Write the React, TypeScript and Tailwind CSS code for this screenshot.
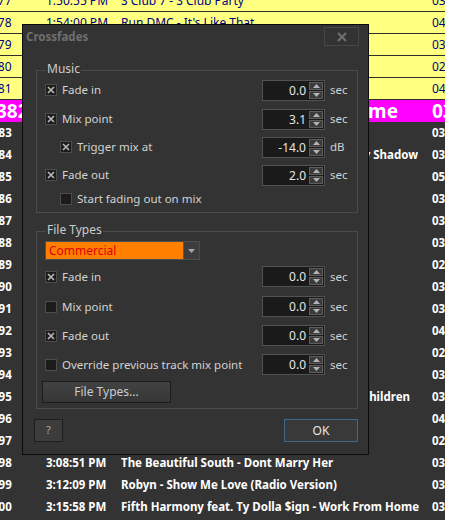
import React from 'react';

type Row = { n: string; t: string; title: string; d: string; end?: number };

const yellowRows: Row[] = [
  { n: '377', t: '1:50:55 PM', title: 'S Club 7 - S Club Party', d: '03:48' },
  { n: '378', t: '1:54:00 PM', title: "Run DMC - It's Like That", d: '04:10' },
  { n: '379', t: '1:58:10 PM', title: 'Steps - Tragedy', d: '03:54' },
  { n: '380', t: '2:02:04 PM', title: 'Blondie - Atomic', d: '02:59' },
  { n: '381', t: '2:05:03 PM', title: 'Madonna - Music', d: '04:12' },
];

const darkRows: Row[] = [
  { n: '383', t: '2:12:51 PM', title: 'Rihanna - Only Girl (In The World)', d: '03:55' },
  { n: '384', t: '2:16:46 PM', title: 'Ellie Goulding - Lights (Bassnectar Remix) feat. Ivy Shadow', d: '03:30', end: 297 },
  { n: '385', t: '2:20:16 PM', title: 'Oasis - Wonderwall', d: '05:02' },
  { n: '386', t: '2:25:18 PM', title: 'Take That - Shine', d: '03:31' },
  { n: '387', t: '2:28:49 PM', title: 'Coldplay - Yellow', d: '03:46' },
  { n: '388', t: '2:32:35 PM', title: 'Katy Perry - Roar', d: '03:43' },
  { n: '389', t: '2:36:18 PM', title: 'Pharrell Williams - Happy', d: '02:59' },
  { n: '390', t: '2:39:17 PM', title: 'Adele - Rolling In The Deep', d: '03:48' },
  { n: '391', t: '2:43:05 PM', title: 'The Killers - Mr. Brightside', d: '03:42' },
  { n: '392', t: '2:46:47 PM', title: 'Muse - Starlight', d: '04:00' },
  { n: '393', t: '2:50:47 PM', title: 'Shakira - Hips Dont Lie', d: '02:58' },
  { n: '394', t: '2:53:45 PM', title: 'Dido - Thank You', d: '03:38' },
  { n: '395', t: '2:57:23 PM', title: 'Sub Focus - Endorphins feat. Alex Clare & Children', d: '03:25', end: 289 },
  { n: '396', t: '3:00:48 PM', title: 'Keane - Somewhere Only We Know', d: '04:57' },
  { n: '397', t: '3:05:45 PM', title: 'Sugababes - Push The Button', d: '02:06' },
  { n: '398', t: '3:08:51 PM', title: 'The Beautiful South - Dont Marry Her', d: '03:18' },
  { n: '399', t: '3:12:09 PM', title: 'Robyn - Show Me Love (Radio Version)', d: '03:49' },
  { n: '400', t: '3:15:58 PM', title: 'Fifth Harmony feat. Ty Dolla $ign - Work From Home', d: '03:34' },
];

function Title({ title, end }: { title: string; end?: number }) {
  if (end) {
    return (
      <div className="w-[311px] shrink-0">
        <div className="flex justify-end overflow-hidden whitespace-nowrap" style={{ width: end }}>
          <span className="shrink-0">{title}</span>
        </div>
      </div>
    );
  }
  return <div className="w-[311px] shrink-0 overflow-hidden whitespace-nowrap">{title}</div>;
}

function Check({ checked }: { checked: boolean }) {
  return (
    <span className="w-[12px] h-[12px] shrink-0 bg-[#1c1c1c] border border-[#4d4d4d] flex items-center justify-center">
      {checked && (
        <svg width="8" height="8" viewBox="0 0 8 8">
          <path d="M1 1L7 7M7 1L1 7" stroke="#b5b5b5" strokeWidth="1.7" />
        </svg>
      )}
    </span>
  );
}

function Spin({ v }: { v: string }) {
  return (
    <div className="w-[63px] h-[21px] shrink-0 flex border border-[#525252] bg-[#1a1a1a]">
      <div className="flex-1 text-right pr-[2px] text-[12px] leading-[19px] text-[#e6e6e6]">{v}</div>
      <div className="w-[16px] flex flex-col gap-[1px] p-[1px]">
        <div className="flex-1 bg-[#3b3b3b] border border-[#5e5e5e] flex items-center justify-center">
          <svg width="7" height="4" viewBox="0 0 7 4">
            <path d="M0 4L3.5 0L7 4Z" fill="#b4b4b4" />
          </svg>
        </div>
        <div className="flex-1 bg-[#3b3b3b] border border-[#5e5e5e] flex items-center justify-center">
          <svg width="7" height="4" viewBox="0 0 7 4">
            <path d="M0 0L3.5 4L7 0Z" fill="#b4b4b4" />
          </svg>
        </div>
      </div>
    </div>
  );
}

function SpinRow({
  label,
  checked,
  v,
  unit,
  indent,
  className = '',
}: {
  label: string;
  checked: boolean;
  v?: string;
  unit?: string;
  indent?: boolean;
  className?: string;
}) {
  return (
    <div className={`flex items-center pl-[8px] ${className}`}>
      <div className="w-[217px] shrink-0 flex items-center">
        {indent && <span className="w-[15px] shrink-0" />}
        <Check checked={checked} />
        <span className="ml-[5px] text-[11.5px] text-[#d2d2d2] whitespace-nowrap">{label}</span>
      </div>
      {v !== undefined && <Spin v={v} />}
      {unit && <span className="ml-[5px] text-[11.5px] text-[#d2d2d2]">{unit}</span>}
    </div>
  );
}

function Group({ label, className = '', children }: { label: string; className?: string; children: React.ReactNode }) {
  return (
    <div className={`relative ml-[13px] w-[322px] border border-[#4a4a4a] ${className}`}>
      <span className="absolute left-[9px] top-[-10px] bg-[#333333] px-[1px] text-[12px] leading-[16px] text-[#cccccc]">
        {label}
      </span>
      {children}
    </div>
  );
}

export default function App() {
  return (
    <div className="relative w-[457px] h-[520px] overflow-hidden bg-white font-['Noto_Sans',sans-serif]">
      <div className="w-[445px] h-full bg-[#333333] overflow-hidden">
        <div className="mt-[-10px]">
          {yellowRows.map((r) => (
            <div
              key={r.n}
              className="flex items-center h-[22px] bg-[#ffff80] border-b border-[#2e2e2e] text-[12px] text-[#000080] whitespace-nowrap"
            >
              <div className="w-[55px] shrink-0 ml-[-9px]">{r.n}</div>
              <div className="w-[75px] shrink-0">{r.t}</div>
              <Title title={r.title} />
              <div className="shrink-0">{r.d}</div>
            </div>
          ))}
          <div className="flex items-center h-[22px] bg-[#ff00ff] text-[19px] font-bold text-white whitespace-nowrap leading-[22px]">
            <div className="w-[50px] shrink-0 ml-[-4px]">382</div>
            <div className="w-[75px] shrink-0">2:09:15 PM</div>
            <Title title="Cheryl - Call My Name" end={277} />
            <div className="shrink-0">03:36</div>
          </div>
          {darkRows.map((r) => (
            <div key={r.n} className="flex items-center h-[22px] text-[11.5px] font-bold text-white whitespace-nowrap">
              <div className="w-[54px] shrink-0 ml-[-8px]">{r.n}</div>
              <div className="w-[75px] shrink-0">{r.t}</div>
              <Title title={r.title} end={r.end} />
              <div className="shrink-0">{r.d}</div>
            </div>
          ))}
        </div>
      </div>

      {/* Dialog */}
      <div className="absolute left-[22px] top-[24px] w-[347px] h-[431px] bg-[#333333] border border-[#0c0c0c] flex flex-col">
        <div className="h-[24px] flex items-start justify-between">
          <span className="pl-[3px] pt-[5px] text-[11.5px] font-bold text-[#707070] leading-[14px]">Crossfades</span>
          <div className="mt-[2px] mr-[9px] w-[35px] h-[19px] border border-[#474747] flex items-center justify-center">
            <svg width="10" height="10" viewBox="0 0 10 10">
              <path d="M1 1L9 9M9 1L1 9" stroke="#6f6f6f" strokeWidth="2.2" />
            </svg>
          </div>
        </div>

        <Group label="Music" className="mt-[21px] h-[143px] pt-[8px]">
          <SpinRow label="Fade in" checked v="0.0" unit="sec" className="h-[22px]" />
          <SpinRow label="Mix point" checked v="3.1" unit="sec" className="h-[22px] mt-[7px]" />
          <SpinRow label="Trigger mix at" checked indent v="-14.0" unit="dB" className="h-[22px] mt-[6px]" />
          <SpinRow label="Fade out" checked v="2.0" unit="sec" className="h-[22px] mt-[6px]" />
          <SpinRow label="Start fading out on mix" checked={false} indent className="h-[20px] mt-[3px]" />
        </Group>

        <Group label="File Types" className="mt-[18px] h-[178px] pt-[9px]">
          <div className="ml-[8px] w-[155px] h-[19px] flex border border-[#4e4e4e]">
            <div className="flex-1 bg-[#ff8000] pl-[3px] text-[12px] leading-[17px] text-[#e00000]">Commercial</div>
            <div className="w-[16px] bg-[#3d3d3d] border-l border-[#555] flex items-center justify-center">
              <svg width="7" height="4" viewBox="0 0 7 4">
                <path d="M0 0L3.5 4L7 0Z" fill="#a8a8a8" />
              </svg>
            </div>
          </div>
          <SpinRow label="Fade in" checked v="0.0" unit="sec" className="h-[21px] mt-[6px]" />
          <SpinRow label="Mix point" checked={false} v="0.0" unit="sec" className="h-[21px] mt-[9px]" />
          <SpinRow label="Fade out" checked v="0.0" unit="sec" className="h-[21px] mt-[8px]" />
          <SpinRow label="Override previous track mix point" checked={false} v="0.0" unit="sec" className="h-[21px] mt-[8px]" />
          <button className="mt-[6px] ml-[5px] w-[129px] h-[22px] border border-[#1c1c1c] bg-gradient-to-b from-[#424242] to-[#363636] text-[12px] text-[#c9cdd2] leading-[18px]">
            File Types...
          </button>
        </Group>

        <div className="mt-[10px] ml-[11px] w-[324px] h-[23px] flex justify-between">
          <button className="w-[29px] h-[23px] border border-[#1e1e1e] bg-[#3c3c3c] text-[11px] text-[#a8a8a8]">?</button>
          <button className="w-[74px] h-[23px] border border-[#3d6a8a] bg-[#393939] text-[12px] text-[#e8e8e8]">OK</button>
        </div>
      </div>
    </div>
  );
}
